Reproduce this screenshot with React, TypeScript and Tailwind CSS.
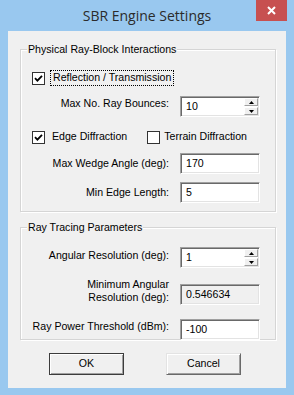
import React from 'react';

const ui = "font-['Liberation_Sans',Arial,sans-serif] text-[10.6px] text-black";

function Spinner() {
  return (
    <div className="flex flex-col gap-[1px] w-[15px] h-full py-[1px] pr-[1px]">
      {['up', 'down'].map((d) => (
        <div
          key={d}
          className="flex-1 flex items-center justify-center bg-[#f0f0f0] border border-t-white border-l-white border-b-[#a0a0a0] border-r-[#a0a0a0]"
        >
          <svg width="5" height="3" viewBox="0 0 5 3">
            {d === 'up' ? <path d="M0 3 L2.5 0 L5 3 Z" fill="#000" /> : <path d="M0 0 L5 0 L2.5 3 Z" fill="#000" />}
          </svg>
        </div>
      ))}
    </div>
  );
}

function Field({ value, spin, readOnly }: { value: string; spin?: boolean; readOnly?: boolean }) {
  return (
    <div
      className={`w-[80px] h-[21px] flex items-center border border-t-[#a0a0a0] border-l-[#a0a0a0] border-b-white border-r-white shadow-[inset_1px_1px_0_#696969,inset_-1px_-1px_0_#e3e3e3] ${
        readOnly ? 'bg-[#f0f0f0]' : 'bg-white'
      }`}
    >
      <span className="flex-1 pl-[5px] leading-none">{value}</span>
      {spin && <Spinner />}
    </div>
  );
}

function Row({ label, children, raise, className = '' }: { label: React.ReactNode; children: React.ReactNode; raise?: string; className?: string }) {
  return (
    <div className={`flex items-center ${className}`}>
      <div className={`w-[148px] text-right leading-[13px] ${raise ?? ''}`}>{label}</div>
      <div className="ml-[11px]">{children}</div>
    </div>
  );
}

function Check({ checked }: { checked: boolean }) {
  return (
    <div className="w-[13px] h-[13px] border border-[#333] bg-white flex items-center justify-center">
      {checked && (
        <svg width="9" height="9" viewBox="0 0 9 9">
          <path d="M1 4.2 L3.4 6.6 L8 1.8" stroke="#000" strokeWidth="1.8" fill="none" />
        </svg>
      )}
    </div>
  );
}

function Group({ title, className, children }: { title: string; className: string; children: React.ReactNode }) {
  return (
    <div className={`relative ml-[12px] mr-[10px] border border-[#d5d5d5] shadow-[inset_1px_1px_0_#fff,1px_1px_0_#fff] ${className}`}>
      <span className="absolute left-[6px] -top-[7px] px-[1px] bg-[#f0f0f0] leading-[13px]">{title}</span>
      {children}
    </div>
  );
}

export default function App() {
  return (
    <div className={`w-[294px] h-[395px] bg-[#99c8ef] flex flex-col ${ui}`}>
      <div className="relative h-[31px] flex items-center justify-center">
        <span className="font-['Open_Sans',sans-serif] text-[14px] text-[#2b2b2b] -mt-[1px]">SBR Engine Settings</span>
        <div className="absolute right-[7px] top-0 w-[31px] h-[21px] bg-[#c75050] flex items-center justify-center">
          <svg width="9" height="9" viewBox="0 0 9 9">
            <path d="M1 1 L8 8 M8 1 L1 8" stroke="#fff" strokeWidth="2" />
          </svg>
        </div>
      </div>

      <div className="mx-[8px] h-[357px] bg-[#f0f0f0] flex flex-col">
        <Group title="Physical Ray-Block Interactions" className="mt-[18px] h-[163px] pt-[20px]">
          <div className="flex items-center h-[16px] pl-[11px]">
            <Check checked />
            <span className="ml-[5px] px-[2px] h-[16px] flex items-center border border-dotted border-black">
              Reflection / Transmission
            </span>
          </div>
          <Row label="Max No. Ray Bounces:" raise="mb-[6px]" className="mt-[10px]">
            <Field value="10" spin />
          </Row>
          <div className="flex items-center h-[16px] mt-[12px] pl-[11px]">
            <Check checked />
            <span className="ml-[7px]">Edge Diffraction</span>
            <div className="ml-[20px]">
              <Check checked={false} />
            </div>
            <span className="ml-[4px]">Terrain Diffraction</span>
          </div>
          <Row label="Max Wedge Angle (deg):" className="mt-[8px]">
            <Field value="170" />
          </Row>
          <Row label="Min Edge Length:" className="mt-[8px]">
            <Field value="5" />
          </Row>
        </Group>

        <Group title="Ray Tracing Parameters" className="mt-[15px] h-[113px] pt-[19px]">
          <Row label="Angular Resolution (deg):" raise="mb-[4px]">
            <Field value="1" spin />
          </Row>
          <Row
            label={
              <>
                Minimum Angular
                <br />
                Resolution (deg):
              </>
            }
            raise="mb-[6px]"
            className="mt-[10px]"
          >
            <Field value="0.546634" readOnly />
          </Row>
          <Row label="Ray Power Threshold (dBm):" raise="mb-[7px]" className="mt-[9px]">
            <Field value="-100" />
          </Row>
        </Group>

        <div className="flex mt-[13px] pl-[41px] gap-[42px]">
          <button className="w-[75px] h-[22px] border border-[#3c3c3c] bg-[#f0f0f0] shadow-[inset_1px_1px_0_#fff,inset_-1px_-1px_0_#a0a0a0]">
            OK
          </button>
          <button className="w-[75px] h-[22px] border border-t-[#e3e3e3] border-l-[#e3e3e3] border-b-[#696969] border-r-[#696969] bg-[#f0f0f0] shadow-[inset_1px_1px_0_#fff,inset_-1px_-1px_0_#a0a0a0]">
            Cancel
          </button>
        </div>
      </div>
    </div>
  );
}
